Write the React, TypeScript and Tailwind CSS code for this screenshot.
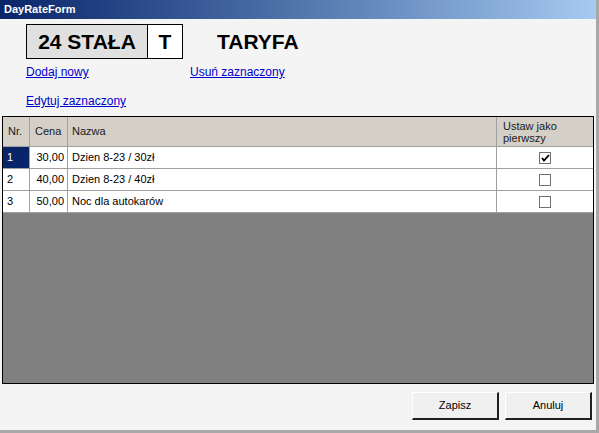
const rows = [
  { nr: '1', cena: '30,00', nazwa: 'Dzien 8-23 / 30zł', first: true },
  { nr: '2', cena: '40,00', nazwa: 'Dzien 8-23 / 40zł', first: false },
  { nr: '3', cena: '50,00', nazwa: 'Noc dla autokarów', first: false },
];

function CheckBox({ checked }: { checked: boolean }) {
  return (
    <div className="w-[12px] h-[12px] border border-[#707070] bg-white flex items-center justify-center">
      {checked && (
        <svg width="9" height="8" viewBox="0 0 9 8">
          <path d="M1 4 L3 6.5 L8 1" stroke="#000" strokeWidth="1.8" fill="none" />
        </svg>
      )}
    </div>
  );
}

function Button({ label }: { label: string }) {
  return (
    <button className="w-[87px] h-[28px] bg-[#f0f0f0] border-t border-l border-t-white border-l-white border-b-2 border-r-2 border-b-[#202020] border-r-[#202020] text-[11px] text-black">
      {label}
    </button>
  );
}

export default function App() {
  return (
    <div
      className="w-[599px] h-[433px] flex flex-col bg-[#f4f4f4] border-r-[3px] border-b-[3px] border-r-[#a8a8a8] border-b-[#a8a8a8] overflow-hidden"
      style={{ fontFamily: '"Liberation Sans", Arial, sans-serif' }}
    >
      <div className="h-[19px] shrink-0 bg-gradient-to-r from-[#0a246a] to-[#a6caf0] pl-[4px] text-[11px] font-bold text-white leading-[19px]">
        DayRateForm
      </div>

      <div className="flex items-center mt-[5px] ml-[26px]">
        <div className="w-[122px] h-[35px] border border-black bg-[#e0e0e0] flex items-center justify-center text-[21px] font-bold text-black">
          24 STAŁA
        </div>
        <div className="w-[35px] h-[35px] border border-l-0 border-black bg-white flex items-center justify-center text-[21px] font-bold text-black">
          T
        </div>
        <div className="ml-[34px] text-[21px] font-bold text-black">TARYFA</div>
      </div>

      <div className="flex ml-[26px] mt-[6px] text-[12px] text-[#0000cc] underline leading-[14px]">
        <span className="w-[164px]">Dodaj nowy</span>
        <span>Usuń zaznaczony</span>
      </div>
      <div className="ml-[26px] mt-[15px] text-[12px] text-[#0000cc] underline leading-[14px]">
        Edytuj zaznaczony
      </div>

      <div className="ml-[2px] mt-[8px] w-[592px] h-[268px] shrink-0 border border-black bg-[#808080] flex flex-col text-[11px] text-black">
        <div className="h-[30px] bg-[#d4d0c8] flex border-b border-[#a0a0a0] text-[#202020]">
          <div className="w-[27px] flex items-center pl-[5px] border-r border-[#a0a0a0]">Nr.</div>
          <div className="w-[38px] flex items-center pl-[5px] border-r border-[#a0a0a0]">Cena</div>
          <div className="w-[429px] flex items-center pl-[4px] border-r border-[#a0a0a0]">Nazwa</div>
          <div className="flex-1 flex flex-col justify-center pl-[6px] leading-[12px]">
            <span>Ustaw jako</span>
            <span>pierwszy</span>
          </div>
        </div>
        {rows.map((r) => (
          <div key={r.nr} className="h-[22px] bg-white flex border-b border-[#a0a0a0]">
            <div
              className={
                r.first
                  ? 'w-[27px] flex items-center pl-[4px] border-r border-[#a0a0a0] bg-[#0a246a] text-white'
                  : 'w-[27px] flex items-center pl-[4px] border-r border-[#a0a0a0]'
              }
            >
              {r.nr}
            </div>
            <div className="w-[38px] flex items-center justify-end pr-[3px] border-r border-[#a0a0a0]">{r.cena}</div>
            <div className="w-[429px] flex items-center pl-[4px] border-r border-[#a0a0a0]">{r.nazwa}</div>
            <div className="flex-1 flex items-center justify-center">
              <CheckBox checked={r.first} />
            </div>
          </div>
        ))}
      </div>

      <div className="flex justify-end gap-[6px] mt-[8px] pr-[4px]">
        <Button label="Zapisz" />
        <Button label="Anuluj" />
      </div>
    </div>
  );
}
